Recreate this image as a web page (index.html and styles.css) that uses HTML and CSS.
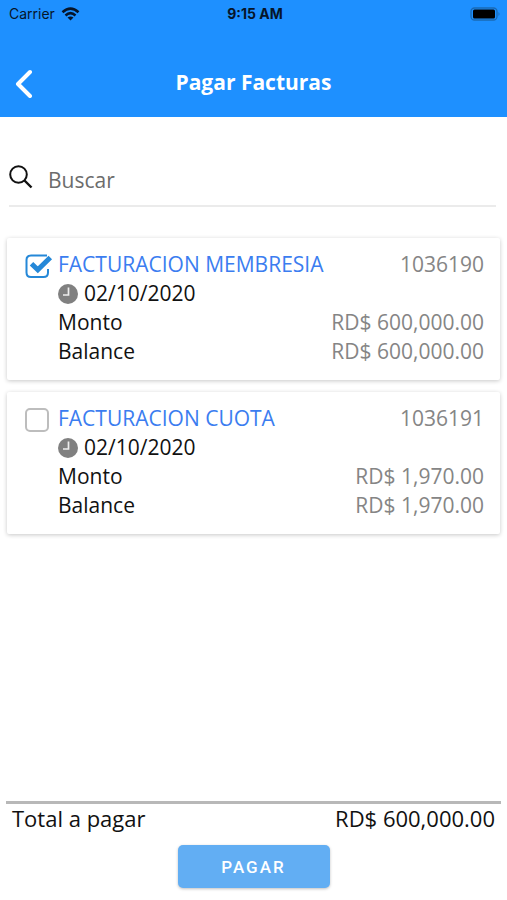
FILE: index.html
```html
<!DOCTYPE html>
<html lang="es">
<head>
<meta charset="utf-8">
<meta name="viewport" content="width=device-width, initial-scale=1">
<title>Pagar Facturas</title>
<link rel="stylesheet" href="styles.css">
</head>
<body>
<svg width="0" height="0" class="defs" aria-hidden="true">
  <symbol id="clock" viewBox="0 0 20 20">
    <circle cx="10" cy="10" r="10" fill="#808080"/>
    <path d="M10.500 3.500v7.500H5" fill="none" stroke="#eee" stroke-width="1.700"/>
  </symbol>
  <symbol id="check" viewBox="0 0 28 26">
    <path d="M22 1.500H6Q1.500 1.500 1.500 6V18.500Q1.500 23 6 23H18.500Q23 23 23 18.500V15" fill="none" stroke="#2588d8" stroke-width="2"/>
    <path d="M6.500 9.800L12.800 15.800L25.300 3.500" fill="none" stroke="#2588d8" stroke-width="5"/>
  </symbol>
</svg>
<div class="screen">
  <header class="header">
    <div class="status">
      <div class="carrier">
        <span>Carrier</span>
        <svg width="19" height="14" viewBox="0 0 18 14" fill="none" stroke="#06152a" stroke-width="2.600" aria-hidden="true">
          <path d="M1 5.200Q9-1.800 17 5.200"/>
          <path d="M4 8.400Q9 4 14 8.400"/>
          <path d="M9 13.400L6 10.600Q9 8.400 12 10.600Z" fill="#06152a" stroke="none"/>
        </svg>
      </div>
      <span class="time">9:15 AM</span>
      <svg class="battery" width="31" height="14" viewBox="0 0 31 14" aria-hidden="true">
        <rect x="1" y="1" width="26" height="12" rx="3.500" fill="#1e90ff" stroke="#1a69b4" stroke-width="1.300"/>
        <rect x="3" y="2.500" width="22" height="9" rx="1.500" fill="#000"/>
        <path d="M28.500 5q2 2 0 4z" fill="#1a69b4"/>
      </svg>
    </div>
    <div class="navbar">
      <button class="back" type="button" aria-label="Volver">
        <svg width="18" height="30" viewBox="0 0 18 30" fill="none" stroke="#fff" stroke-width="4" stroke-linecap="round" stroke-linejoin="round" aria-hidden="true"><path d="M15 4L3 16L15 28"/></svg>
      </button>
      <h1 class="title">Pagar Facturas</h1>
    </div>
  </header>

  <main class="content">
    <div class="search">
      <label class="search-label" for="search" aria-label="Buscar">
        <svg width="24" height="24" viewBox="0 0 24 24" fill="none" stroke="#111" stroke-width="2" aria-hidden="true"><circle cx="9.500" cy="9.500" r="8.300"/><path d="M15.500 15.500L22.500 22.500" stroke-width="2.400"/></svg>
      </label>
      <input class="search-input" id="search" type="text" placeholder="Buscar">
    </div>

    <section class="card">
      <div class="tick">
        <input class="tick-input" id="invoice-1" type="checkbox" checked>
        <svg class="tick-mark" width="28" height="26" aria-hidden="true"><use href="#check"/></svg>
      </div>
      <div class="details">
        <div class="row"><label class="name" for="invoice-1">FACTURACION MEMBRESIA</label><span class="value">1036190</span></div>
        <div class="row date"><svg width="20" height="20" aria-hidden="true"><use href="#clock"/></svg><span>02/10/2020</span></div>
        <div class="row"><span>Monto</span><span class="value">RD$ 600,000.00</span></div>
        <div class="row"><span>Balance</span><span class="value">RD$ 600,000.00</span></div>
      </div>
    </section>

    <section class="card">
      <div class="tick">
        <input class="tick-input" id="invoice-2" type="checkbox">
        <svg class="tick-mark" width="28" height="26" aria-hidden="true"><use href="#check"/></svg>
      </div>
      <div class="details">
        <div class="row"><label class="name" for="invoice-2">FACTURACION CUOTA</label><span class="value">1036191</span></div>
        <div class="row date"><svg width="20" height="20" aria-hidden="true"><use href="#clock"/></svg><span>02/10/2020</span></div>
        <div class="row"><span>Monto</span><span class="value">RD$ 1,970.00</span></div>
        <div class="row"><span>Balance</span><span class="value">RD$ 1,970.00</span></div>
      </div>
    </section>
  </main>

  <footer class="footer">
    <div class="total"><span>Total a pagar</span><span>RD$ 600,000.00</span></div>
    <button class="pay" type="button">PAGAR</button>
  </footer>
</div>
</body>
</html>
```
FILE: styles.css
```css
* {
  box-sizing: border-box;
}

body {
  margin: 0;
  background: #fff;
  color: #111;
  font-family: "Open Sans", "Noto Sans", sans-serif;
  font-size: 21px;
  line-height: 29px;
}

svg {
  display: block;
  flex: none;
}

.defs {
  position: absolute;
}

.screen {
  display: flex;
  flex-direction: column;
  min-height: 100vh;
}

.header {
  padding-bottom: 12px;
  background: #1e90ff;
}

.status {
  display: grid;
  grid-template-columns: 1fr auto 1fr;
  align-items: center;
  height: 27px;
  padding: 0 6px 0 9px;
  color: #06152a;
  font-family: Inter, sans-serif;
  font-size: 14px;
  line-height: 20px;
}

.carrier {
  display: flex;
  align-items: center;
  gap: 6px;
}

.time {
  font-weight: 700;
}

.battery {
  justify-self: end;
}

.navbar {
  display: grid;
  grid-template-columns: 48px 1fr 48px;
  align-items: center;
  margin-top: 22px;
  height: 56px;
}

.back {
  display: flex;
  align-items: center;
  height: 48px;
  padding: 12px 15px 0;
  border: 0;
  background: none;
}

.title {
  margin: 0;
  padding-top: 10px;
  color: #fff;
  font-size: 21px;
  font-weight: 700;
  text-align: center;
}

.content {
  flex: 1;
  padding: 38px 7px 0;
}

.search {
  display: flex;
  align-items: center;
  gap: 15px;
  height: 52px;
  margin: 0 4px 31px 2px;
  border-bottom: 2px solid #ebebeb;
}

.search-label {
  padding-bottom: 6px;
}

.search-input {
  flex: 1;
  min-width: 0;
  height: 40px;
  padding: 0;
  border: 0;
  outline: 0;
  background: none;
  color: #111;
  font: inherit;
}

.search-input::placeholder {
  color: #6c6c6c;
  opacity: 1;
}

.card {
  display: flex;
  margin-bottom: 12px;
  padding: 12px 16px 14px 18px;
  border-radius: 2px;
  background: #fff;
  box-shadow: 0 1px 4px rgba(0, 0, 0, 0.22);
}

.tick {
  position: relative;
  width: 33px;
  padding-top: 4px;
}

.tick-input {
  display: block;
  appearance: none;
  width: 24px;
  height: 24px;
  margin: 0;
  border: 2px solid #bdbdbd;
  border-radius: 5px;
  background: #fff;
}

.tick-input:checked {
  opacity: 0;
}

.tick-mark {
  position: absolute;
  top: 4px;
  left: 0;
  display: none;
  pointer-events: none;
}

.tick-input:checked + .tick-mark {
  display: block;
}

.details {
  flex: 1;
}

.row {
  display: flex;
  justify-content: space-between;
}

.date {
  justify-content: flex-start;
  align-items: center;
  gap: 6px;
}

.name {
  color: #3b7df0;
}

.value {
  color: #858585;
}

.footer {
  display: flex;
  flex-direction: column;
  align-items: center;
  gap: 12px;
  padding: 0 6px 12px;
}

.total {
  display: flex;
  justify-content: space-between;
  align-self: stretch;
  padding: 0 6px;
  border-top: 3px solid #b8b8b8;
  font-size: 22px;
}

.pay {
  width: 152px;
  height: 43px;
  padding: 0;
  border: 0;
  border-radius: 5px;
  background: #62aef3;
  box-shadow: 0 1px 3px rgba(0, 0, 0, 0.25);
  color: #fff;
  font-family: Roboto, sans-serif;
  font-size: 17px;
  font-weight: 500;
  letter-spacing: 2px;
}
```
